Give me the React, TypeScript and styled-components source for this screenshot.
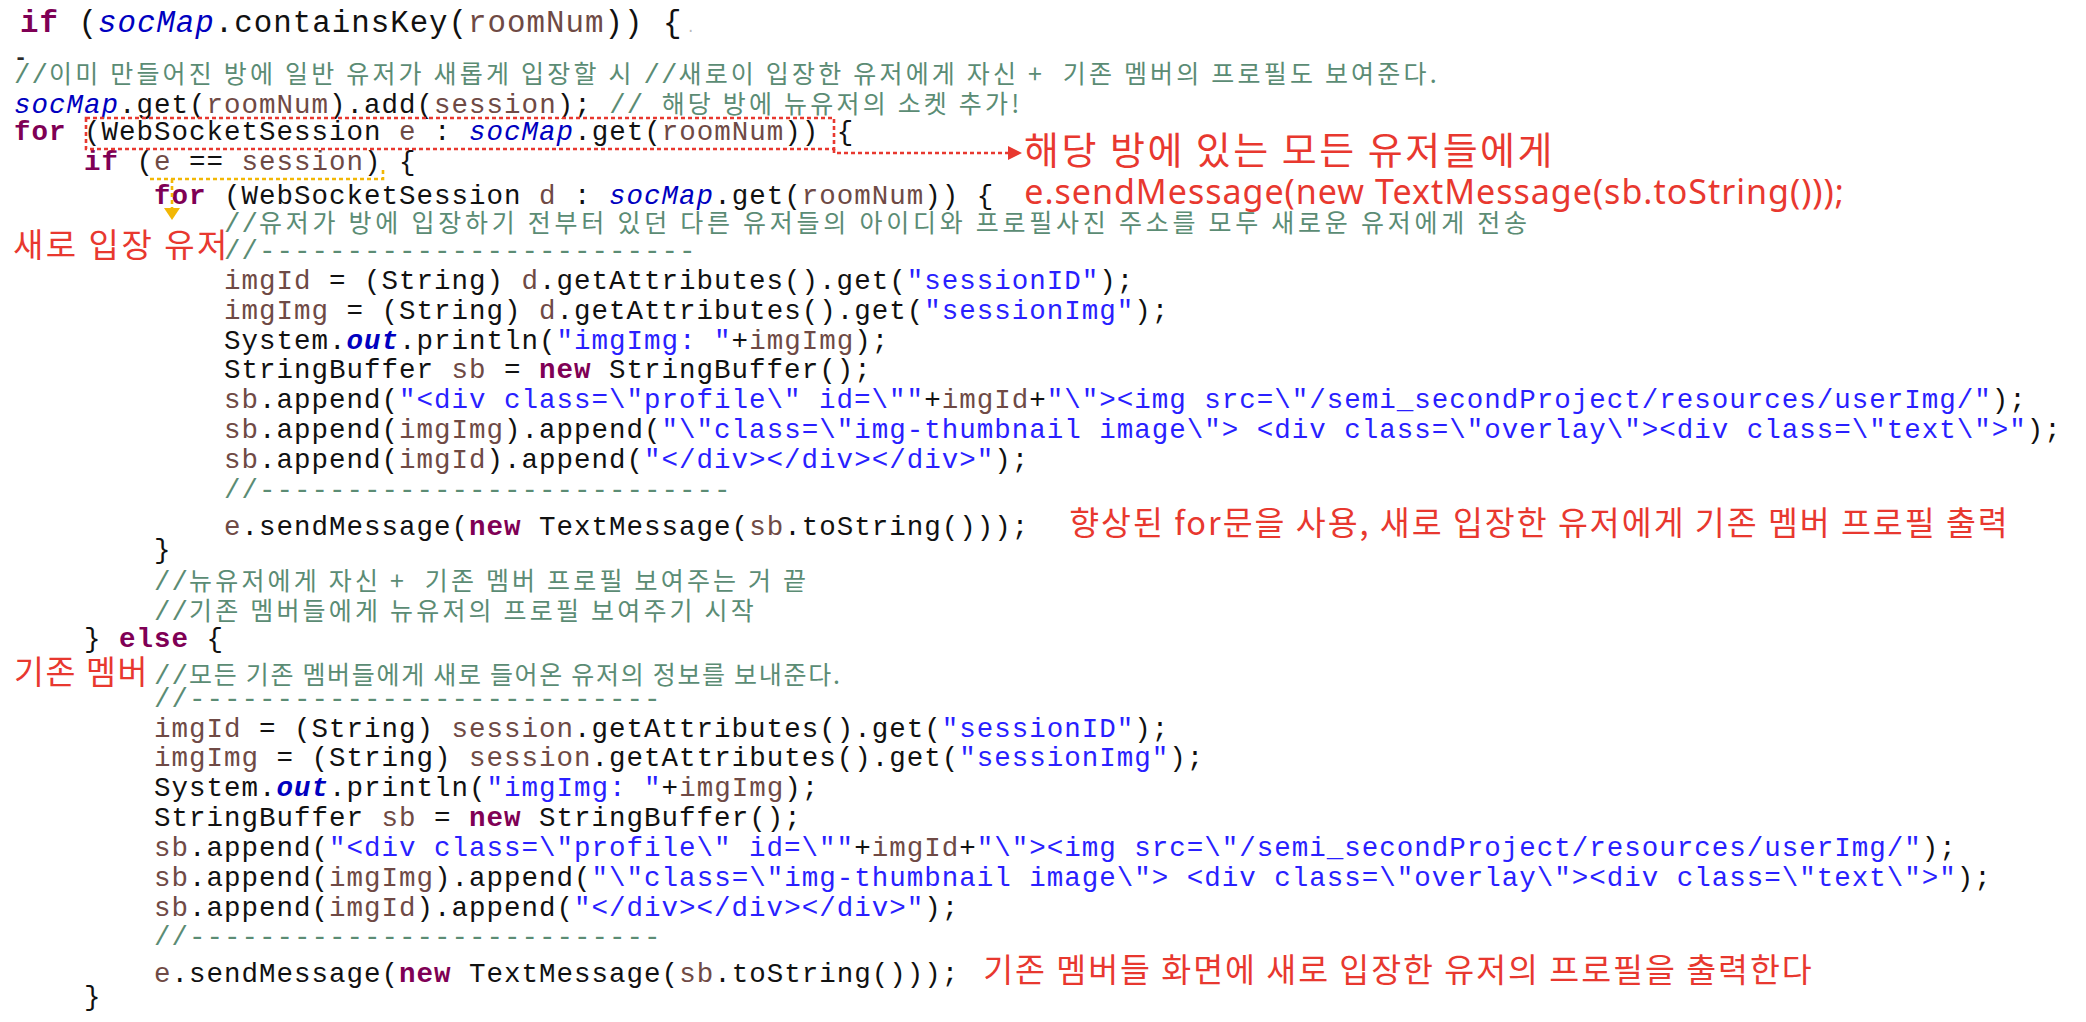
import React from "react";
import styled, { createGlobalStyle } from "styled-components";

const GlobalStyle = createGlobalStyle`
  html, body { margin: 0; padding: 0; background: #ffffff; }
  #root { width: 2086px; height: 1022px; }
`;

const C = {
  kw: "#7f0055",
  field: "#0000c0",
  str: "#2a1fff",
  local: "#6f4a45",
  text: "#111111",
  comment: "#5b8c74",
  red: "#e8382f",
  yellow: "#f2b705",
};

const CHAR = 17.5;
const BASE_X = 14;
const LINE_H = 29.85;

type Kind = "t" | "kw" | "fld" | "out" | "str" | "v" | "cm" | "ko";
type Seg = [Kind, string];
type Row = {
  indent: number;
  segs: Seg[];
  koSpacing?: number;
  note?: { text: string; gap: number };
  codeNote?: { text: string; gap: number };
  label?: string;
};

const Panel = styled.div`
  position: relative;
  width: 2086px;
  height: 1022px;
  padding-top: 2px;
  box-sizing: border-box;
  overflow: hidden;
  background: #ffffff;
  color: ${C.text};
  font-family: "Liberation Mono", "DejaVu Sans Mono", monospace;
`;

const HeadLine = styled.div`
  height: 44px;
  line-height: 44px;
  padding-left: 20px;
  font-size: 30.8px;
  letter-spacing: 1px;
  white-space: pre;
`;

const Cursor = styled.span`
  font-size: 14px;
  color: #b9b9b9;
  margin-left: 4px;
`;

const StubRow = styled.div`
  height: 12px;
  padding-left: 14px;
  display: flex;
  align-items: flex-end;
`;

const StubDash = styled.span`
  font-size: 22px;
  line-height: 14px;
  margin-bottom: -8px;
  font-weight: 700;
  color: #2a2a2a;
`;

const Line = styled.div<{ $indent: number }>`
  height: ${LINE_H}px;
  line-height: ${LINE_H}px;
  padding-left: ${(p) => BASE_X + p.$indent * CHAR}px;
  font-size: 27.5px;
  letter-spacing: 1px;
  white-space: pre;
  display: flex;
  align-items: baseline;
`;

const Plain = styled.span``;
const Keyword = styled.span`
  color: ${C.kw};
  font-weight: 700;
`;
const Field = styled.span`
  color: ${C.field};
  font-style: italic;
`;
const StaticField = styled.span`
  color: ${C.field};
  font-style: italic;
  font-weight: 700;
`;
const Str = styled.span`
  color: ${C.str};
`;
const Local = styled.span`
  color: ${C.local};
`;
const Comment = styled.span`
  color: ${C.comment};
`;
const HangulComment = styled.span<{ $spacing: number }>`
  color: ${C.comment};
  font-family: "Noto Sans CJK KR", "Noto Sans", sans-serif;
  font-size: 25px;
  letter-spacing: ${(p) => p.$spacing}px;
`;

const Note = styled.span<{ $gap: number }>`
  margin-left: ${(p) => p.$gap}px;
  color: ${C.red};
  font-family: "Noto Sans CJK KR", sans-serif;
  font-size: 32.5px;
  letter-spacing: 2px;
`;

const CodeNote = styled.span<{ $gap: number }>`
  margin-left: ${(p) => p.$gap}px;
  color: ${C.red};
  font-family: "Noto Sans", "Noto Sans CJK KR", sans-serif;
  font-size: 34px;
  letter-spacing: 1px;
`;

const SideLabel = styled.span`
  width: ${8 * CHAR}px;
  flex: none;
  color: ${C.red};
  font-family: "Noto Sans CJK KR", sans-serif;
  font-size: 32.5px;
  letter-spacing: 1.6px;
`;

const Callout = styled.div<{ $size: number; $spacing: number }>`
  position: absolute;
  color: ${C.red};
  font-family: "Noto Sans CJK KR", sans-serif;
  font-size: ${(p) => p.$size}px;
  letter-spacing: ${(p) => p.$spacing}px;
  line-height: 40px;
  white-space: pre;
`;

const Overlay = styled.svg`
  position: absolute;
  left: 0;
  top: 0;
  width: 2086px;
  height: 1022px;
  pointer-events: none;
`;

const renderSeg = (spacing: number) => ([k, s]: Seg, i: number) => {
  switch (k) {
    case "kw":
      return <Keyword key={i}>{s}</Keyword>;
    case "fld":
      return <Field key={i}>{s}</Field>;
    case "out":
      return <StaticField key={i}>{s}</StaticField>;
    case "str":
      return <Str key={i}>{s}</Str>;
    case "v":
      return <Local key={i}>{s}</Local>;
    case "cm":
      return <Comment key={i}>{s}</Comment>;
    case "ko":
      return (
        <HangulComment key={i} $spacing={spacing}>
          {s}
        </HangulComment>
      );
    default:
      return <Plain key={i}>{s}</Plain>;
  }
};

const dashes = (n: number): Seg => ["cm", "//" + "-".repeat(n)];

const appendBlock = (src: string): Row[] => [
  { indent: 0, segs: [["v", "imgId"], ["t", " = (String) "], ["v", src], ["t", ".getAttributes().get("], ["str", '"sessionID"'], ["t", ");"]] },
  { indent: 0, segs: [["v", "imgImg"], ["t", " = (String) "], ["v", src], ["t", ".getAttributes().get("], ["str", '"sessionImg"'], ["t", ");"]] },
  { indent: 0, segs: [["t", "System."], ["out", "out"], ["t", ".println("], ["str", '"imgImg: "'], ["t", "+"], ["v", "imgImg"], ["t", ");"]] },
  { indent: 0, segs: [["t", "StringBuffer "], ["v", "sb"], ["t", " = "], ["kw", "new"], ["t", " StringBuffer();"]] },
  {
    indent: 0,
    segs: [
      ["v", "sb"],
      ["t", ".append("],
      ["str", '"<div class=\\"profile\\" id=\\""'],
      ["t", "+"],
      ["v", "imgId"],
      ["t", "+"],
      ["str", '"\\"><img src=\\"/semi_secondProject/resources/userImg/"'],
      ["t", ");"],
    ],
  },
  {
    indent: 0,
    segs: [
      ["v", "sb"],
      ["t", ".append("],
      ["v", "imgImg"],
      ["t", ").append("],
      ["str", '"\\"class=\\"img-thumbnail image\\"> <div class=\\"overlay\\"><div class=\\"text\\">"'],
      ["t", ");"],
    ],
  },
  { indent: 0, segs: [["v", "sb"], ["t", ".append("], ["v", "imgId"], ["t", ").append("], ["str", '"</div></div></div>"'], ["t", ");"]] },
];

const withIndent = (rows: Row[], n: number): Row[] => rows.map((r) => ({ ...r, indent: n }));

const rows: Row[] = [
  {
    indent: 0,
    segs: [
      ["cm", "//"],
      ["ko", "이미 만들어진 방에 일반 유저가 새롭게 입장할 시 "],
      ["cm", "//"],
      ["ko", "새로이 입장한 유저에게 자신 +  기존 멤버의 프로필도 보여준다."],
    ],
  },
  {
    indent: 0,
    segs: [["fld", "socMap"], ["t", ".get("], ["v", "roomNum"], ["t", ").add("], ["v", "session"], ["t", "); "], ["cm", "// "], ["ko", "해당 방에 뉴유저의 소켓 추가!"]],
  },
  {
    indent: 0,
    segs: [["kw", "for"], ["t", " (WebSocketSession "], ["v", "e"], ["t", " : "], ["fld", "socMap"], ["t", ".get("], ["v", "roomNum"], ["t", ")) {"]],
  },
  { indent: 4, segs: [["kw", "if"], ["t", " ("], ["v", "e"], ["t", " == "], ["v", "session"], ["t", ") {"]] },
  {
    indent: 8,
    segs: [["kw", "for"], ["t", " (WebSocketSession "], ["v", "d"], ["t", " : "], ["fld", "socMap"], ["t", ".get("], ["v", "roomNum"], ["t", ")) {"]],
    codeNote: { text: "e.sendMessage(new TextMessage(sb.toString()));", gap: 30 },
  },
  {
    indent: 12,
    koSpacing: 3.75,
    segs: [["cm", "//"], ["ko", "유저가 방에 입장하기 전부터 있던 다른 유저들의 아이디와 프로필사진 주소를 모두 새로운 유저에게 전송"]],
  },
  { indent: 12, segs: [dashes(25)] },
  ...withIndent(appendBlock("d"), 12),
  { indent: 12, segs: [dashes(27)] },
  {
    indent: 12,
    segs: [["v", "e"], ["t", ".sendMessage("], ["kw", "new"], ["t", " TextMessage("], ["v", "sb"], ["t", ".toString()));"]],
    note: { text: "향상된 for문을 사용, 새로 입장한 유저에게 기존 멤버 프로필 출력", gap: 40 },
  },
  { indent: 8, segs: [["t", "}"]] },
  { indent: 8, segs: [["cm", "//"], ["ko", "뉴유저에게 자신 +  기존 멤버 프로필 보여주는 거 끝"]] },
  { indent: 8, segs: [["cm", "//"], ["ko", "기존 멤버들에게 뉴유저의 프로필 보여주기 시작"]] },
  { indent: 4, segs: [["t", "} "], ["kw", "else"], ["t", " {"]] },
  {
    indent: 0,
    label: "기존 멤버",
    koSpacing: 1.7,
    segs: [["cm", "//"], ["ko", "모든 기존 멤버들에게 새로 들어온 유저의 정보를 보내준다."]],
  },
  { indent: 8, segs: [dashes(27)] },
  ...withIndent(appendBlock("session"), 8),
  { indent: 8, segs: [dashes(27)] },
  {
    indent: 8,
    segs: [["v", "e"], ["t", ".sendMessage("], ["kw", "new"], ["t", " TextMessage("], ["v", "sb"], ["t", ".toString()));"]],
    note: { text: "기존 멤버들 화면에 새로 입장한 유저의 프로필을 출력한다", gap: 24 },
  },
  { indent: 4, segs: [["t", "}"]] },
];

const Arrows: React.FC = () => (
  <Overlay viewBox="0 0 2086 1022">
    <g fill="none" stroke={C.red} strokeWidth={2.6} strokeDasharray="4 3">
      <rect x={86} y={118} width={748} height={31} />
      <polyline points="834,149 834,153 1010,153" />
    </g>
    <polygon points="1008,146 1022,153 1008,160" fill={C.red} />
    <g fill="none" stroke={C.yellow} strokeWidth={2.6} strokeDasharray="4 3">
      <polyline points="383,170 383,179 147,179" />
      <line x1={172} y1={179} x2={172} y2={209} />
    </g>
    <polygon points="164,208 180,208 172,220" fill={C.yellow} />
  </Overlay>
);

export default function App() {
  return (
    <>
      <GlobalStyle />
      <Panel>
        <HeadLine>
          <Keyword>if</Keyword>
          <Plain> (</Plain>
          <Field>socMap</Field>
          <Plain>.containsKey(</Plain>
          <Local>roomNum</Local>
          <Plain>)) {"{"}</Plain>
          <Cursor>.</Cursor>
        </HeadLine>
        <StubRow>
          <StubDash>-</StubDash>
        </StubRow>
        {rows.map((r, i) => (
          <Line key={i} $indent={r.indent}>
            {r.label && <SideLabel>{r.label}</SideLabel>}
            {r.segs.map(renderSeg(r.koSpacing ?? 3.2))}
            {r.note && <Note $gap={r.note.gap}>{r.note.text}</Note>}
            {r.codeNote && <CodeNote $gap={r.codeNote.gap}>{r.codeNote.text}</CodeNote>}
          </Line>
        ))}
        <Arrows />
        <Callout $size={38} $spacing={2.5} style={{ left: 1024, top: 128 }}>
          해당 방에 있는 모든 유저들에게
        </Callout>
        <Callout $size={33} $spacing={2.5} style={{ left: 13, top: 223 }}>
          새로 입장 유저
        </Callout>
      </Panel>
    </>
  );
}
